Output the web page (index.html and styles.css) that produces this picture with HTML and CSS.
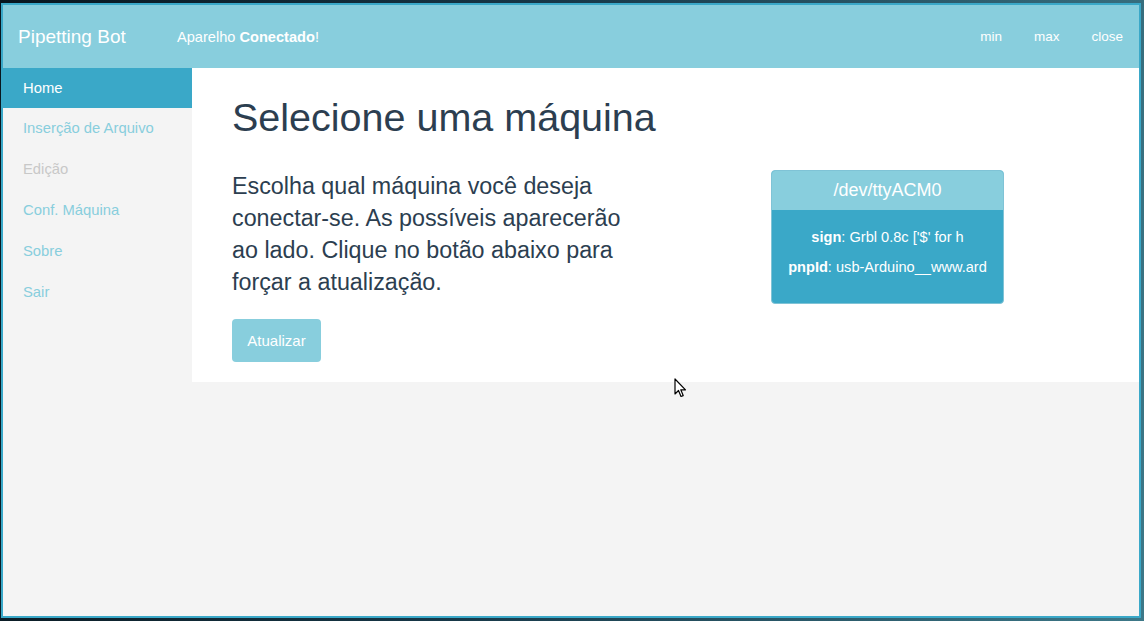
FILE: index.html
```html
<!DOCTYPE html>
<html lang="pt">
<head>
<meta charset="utf-8">
<title>Pipetting Bot</title>
<link rel="stylesheet" href="styles.css">
</head>
<body>
<div class="window">
  <header class="topbar">
    <div class="brand">Pipetting Bot</div>
    <div class="status">Aparelho <strong>Conectado</strong>!</div>
    <nav class="winctl">
      <span>min</span>
      <span>max</span>
      <span>close</span>
    </nav>
  </header>
  <div class="body">
    <aside class="sidebar">
      <a class="item active">Home</a>
      <a class="item">Inserção de Arquivo</a>
      <a class="item disabled">Edição</a>
      <a class="item">Conf. Máquina</a>
      <a class="item">Sobre</a>
      <a class="item">Sair</a>
    </aside>
    <div class="mainwrap">
      <main class="main">
        <h1 class="title">Selecione uma máquina</h1>
        <div class="row">
          <div class="left">
            <p class="lead">Escolha qual máquina você deseja conectar-se. As possíveis aparecerão ao lado. Clique no botão abaixo para forçar a atualização.</p>
            <button class="btn">Atualizar</button>
          </div>
          <div class="right">
            <div class="card">
              <div class="card-head">/dev/ttyACM0</div>
              <div class="card-body">
                <p><strong>sign</strong>: Grbl 0.8c ['$' for h</p>
                <p><strong>pnpId</strong>: usb-Arduino__www.ard</p>
              </div>
            </div>
          </div>
        </div>
      </main>
    </div>
  </div>
</div>
<svg class="cursor" width="14" height="22" viewBox="0 0 14 22">
  <path d="M1 1 L1 16 L4.5 12.5 L7 18.5 L9.2 17.6 L6.8 11.8 L11.5 11.8 Z" fill="#fff" stroke="#000" stroke-width="1.2" stroke-linejoin="round"/>
</svg>
</body>
</html>
```

FILE: styles.css
```css
* { box-sizing: border-box; }
html, body { margin: 0; padding: 0; }
body {
  width: 1144px;
  height: 621px;
  overflow: hidden;
  background: linear-gradient(100deg, #08161e 0%, #173848 45%, #3d7888 100%);
  font-family: "Liberation Sans", Arial, sans-serif;
  padding: 3px 3px 3px 1px;
  position: relative;
}
.window {
  width: 1140px;
  height: 615px;
  border: 2px solid #3aa8c8;
  background: #f4f4f4;
  display: flex;
  flex-direction: column;
}
.topbar {
  height: 63px;
  flex: none;
  background: #88cedd;
  color: #fff;
  display: flex;
  align-items: center;
  padding: 0 0 0 15px;
}
.brand { font-size: 19px; width: 159px; }
.status { font-size: 14.6px; flex: 1; }
.status strong { font-weight: bold; }
.winctl { display: flex; font-size: 13.5px; padding-right: 16px; }
.winctl span { margin-left: 32px; }
.body { flex: 1; display: flex; align-items: flex-start; }
.sidebar {
  width: 189px;
  flex: none;
  display: flex;
  flex-direction: column;
}
.item {
  display: block;
  height: 41px;
  line-height: 41px;
  padding-left: 20px;
  font-size: 14.8px;
  color: #88cedd;
}
.item.active { background: #3aa8c8; color: #fff; height: 39.5px; line-height: 40px; }
.item.disabled { color: #c8c8c8; }
.mainwrap { flex: 1; }
.main {
  background: #fff;
  height: 314px;
  padding: 28px 40px 0 40px;
}
.title {
  margin: 0;
  font-weight: normal;
  font-size: 39.5px;
  line-height: 43px;
  color: #2c3e50;
}
.row { display: flex; margin-top: 31px; }
.left { width: 420px; flex: none; }
.lead {
  margin: 0;
  font-size: 23.3px;
  line-height: 32px;
  color: #2c3e50;
  width: 400px;
}
.btn {
  margin-top: 21px;
  width: 89px;
  height: 43px;
  border: none;
  border-radius: 4px;
  background: #88cedd;
  color: #fff;
  font-family: "Liberation Sans", Arial, sans-serif;
  font-size: 15px;
  padding: 0;
  display: block;
}
.right { flex: 1; padding-left: 119px; }
.card {
  width: 233px;
  height: 134px;
  border: 1px solid #7fc3d6;
  border-radius: 4px;
  overflow: hidden;
  background: #3aa8c8;
  color: #fff;
}
.card-head {
  height: 39px;
  background: #88cedd;
  font-size: 18px;
  line-height: 38px;
  text-align: center;
}
.card-body { padding: 19px 0 0; text-align: center; font-size: 14.6px; }
.card-body p { margin: 0 0 13px; line-height: 17px; white-space: nowrap; }
.cursor { position: absolute; left: 674px; top: 378px; }
```
